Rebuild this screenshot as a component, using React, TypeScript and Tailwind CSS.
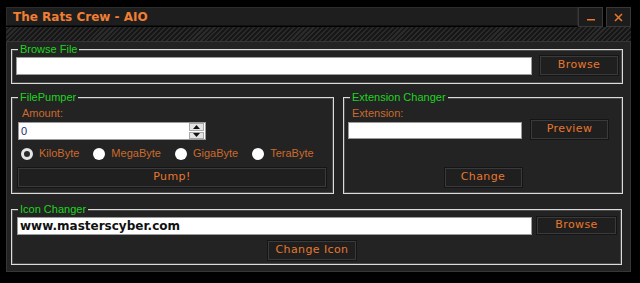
import React from 'react';

const btn =
  "flex items-center justify-center bg-[#1f1f1f] border border-[#3a3a3a] shadow-[0_0_0_1px_#151515] text-[#e8772e] text-[11px] font-['DejaVu_Sans',sans-serif] tracking-[0.4px]";
const box =
  "border border-[#dcdcdc] shadow-[inset_0_0_0_1px_#4a4a4a] font-['Liberation_Sans',sans-serif]";
const legend = "ml-[6px] px-[2px] bg-[#232323] text-[11px] leading-[13px] text-[#1fd31f]";
const label = "text-[11px] leading-[13px] text-[#cc6a2c] font-['Liberation_Sans',sans-serif]";

const Radio = ({ text, checked }: { text: string; checked?: boolean }) => (
  <div className="flex items-center gap-[6px]">
    {checked ? (
      <div className="w-[12px] h-[12px] rounded-full border-[3px] border-[#e6e6e6] bg-[#2a2a2a]" />
    ) : (
      <div className="w-[12px] h-[12px] rounded-full bg-white" />
    )}
    <span className={label}>{text}</span>
  </div>
);

export default function App() {
  return (
    <div className="w-[640px] h-[283px] bg-black pt-[7px] pl-[6px]">
      <div className="w-[625px] h-[265px] flex flex-col">
        {/* title row */}
        <div className="flex items-start h-[20px]">
          <div className="flex-1 h-[19px] bg-[#1e1e1e] border border-[#2c2c2c] border-b-[#111] flex items-center pl-[6px]">
            <span className="text-[12px] font-bold text-[#f07f33] font-['DejaVu_Sans',sans-serif]">
              The Rats Crew - AIO
            </span>
          </div>
          <button className="w-[25px] h-[20px] bg-[#1c1c1c] border border-[#383838] flex items-end justify-center pb-[5px]">
            <svg width="8" height="2"><rect width="8" height="1.5" fill="#e8772e" /></svg>
          </button>
          <button className="ml-[3px] w-[25px] h-[20px] bg-[#1c1c1c] border border-[#383838] flex items-center justify-center">
            <svg width="9" height="9" viewBox="0 0 9 9">
              <path d="M1 1L8 8M8 1L1 8" stroke="#e8772e" strokeWidth="1.5" />
            </svg>
          </button>
        </div>
        {/* hatched strip */}
        <div className="h-[14px] bg-[repeating-linear-gradient(135deg,#2b2b2b_0px,#2b2b2b_1.5px,#171717_1.5px,#171717_3.5px)]" />
        {/* content */}
        <div className="flex-1 bg-[#232323] border border-[#363636] pt-[1px] pl-[4px] pr-[7px]">
          {/* Browse File */}
          <fieldset className={`${box} w-[612px] pb-[8px]`}>
            <legend className={legend}>Browse File</legend>
            <div className="flex items-start">
              <div className="ml-[4px] mt-[1px] w-[516px] h-[18px] bg-white border border-[#9a9a9a]" />
              <button className={`${btn} ml-[8px] w-[78px] h-[19px]`}>Browse</button>
            </div>
          </fieldset>

          <div className="flex gap-[9px] mt-[7px]">
            {/* FilePumper */}
            <fieldset className={`${box} w-[323px] pb-[6px]`}>
              <legend className={legend}>FilePumper</legend>
              <div className={`${label} ml-[10px] mt-[3px]`}>Amount:</div>
              <div className="ml-[6px] mt-[2px] w-[188px] h-[18px] bg-white border border-[#9a9a9a] flex items-center">
                <span className="flex-1 pl-[2px] text-[11px] text-[#1c2a6e] font-['Liberation_Sans',sans-serif]">0</span>
                <div className="w-[15px] h-[16px] mr-[1px] flex flex-col gap-[1px]">
                  <div className="flex-1 bg-[#e4e4e4] border border-[#a8a8a8] flex items-center justify-center">
                    <svg width="7" height="4"><path d="M0 4L3.5 0L7 4Z" fill="#111" /></svg>
                  </div>
                  <div className="flex-1 bg-[#e4e4e4] border border-[#a8a8a8] flex items-center justify-center">
                    <svg width="7" height="4"><path d="M0 0L3.5 4L7 0Z" fill="#111" /></svg>
                  </div>
                </div>
              </div>
              <div className="flex items-center gap-[14px] pl-[9px] mt-[7px]">
                <Radio text="KiloByte" checked />
                <Radio text="MegaByte" />
                <Radio text="GigaByte" />
                <Radio text="TeraByte" />
              </div>
              <button className={`${btn} ml-[6px] mt-[8px] w-[308px] h-[19px]`}>Pump!</button>
            </fieldset>

            {/* Extension Changer */}
            <fieldset className={`${box} w-[280px] pb-[6px]`}>
              <legend className={legend}>Extension Changer</legend>
              <div className={`${label} ml-[8px] mt-[3px]`}>Extension:</div>
              <div className="flex items-end ml-[4px]">
                <div className="w-[174px] h-[17px] bg-white border border-[#9a9a9a]" />
                <button className={`${btn} ml-[9px] w-[77px] h-[19px]`}>Preview</button>
              </div>
              <div className="flex justify-center mt-[29px]">
                <button className={`${btn} w-[77px] h-[19px]`}>Change</button>
              </div>
            </fieldset>
          </div>

          {/* Icon Changer */}
          <fieldset className={`${box} w-[611px] mt-[9px] pb-[4px]`}>
            <legend className={legend}>Icon Changer</legend>
            <div className="flex items-center">
              <div className="ml-[5px] mt-[1px] w-[515px] h-[18px] bg-white border border-[#9a9a9a] flex items-center pl-[2px]">
                <span className="text-[12px] font-bold text-[#111] font-['DejaVu_Sans',sans-serif]">
                  www.masterscyber.com
                </span>
              </div>
              <button className={`${btn} ml-[5px] w-[79px] h-[17px]`}>Browse</button>
            </div>
            <button className={`${btn} ml-[256px] mt-[6px] w-[88px] h-[19px]`}>Change Icon</button>
          </fieldset>
        </div>
      </div>
    </div>
  );
}
